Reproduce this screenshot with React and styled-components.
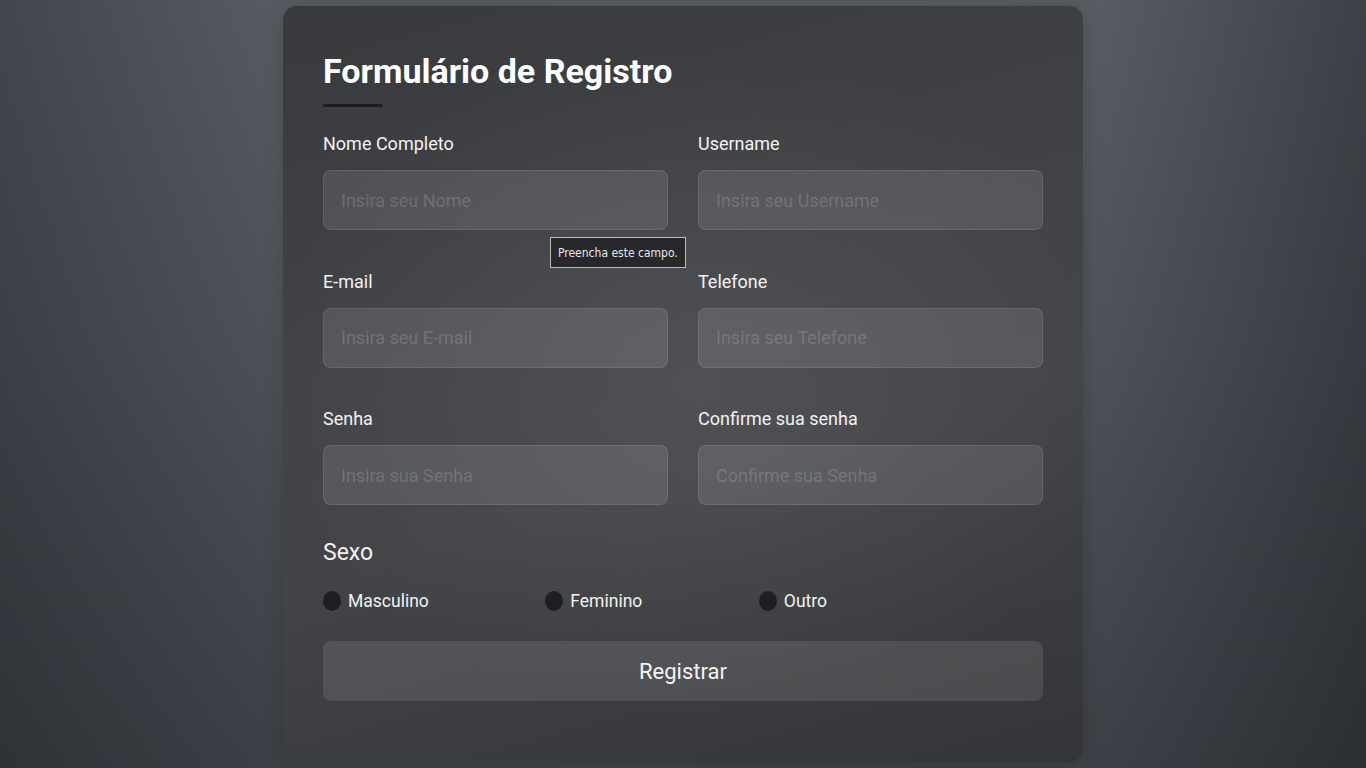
import React from "react";
import styled, { createGlobalStyle } from "styled-components";

const Global = createGlobalStyle`
  html, body { margin: 0; padding: 0; }
  body {
    font-family: Roboto, "Noto Sans", "Liberation Sans", sans-serif;
    background: #45484e;
  }
  * { box-sizing: border-box; }
`;

const Page = styled.div`
  min-height: 100vh;
  display: flex;
  justify-content: center;
  align-items: flex-start;
  padding-top: 6px;
  background:
    linear-gradient(90deg, rgba(10, 12, 16, 0.28) 0%, rgba(10, 12, 16, 0) 22%, rgba(10, 12, 16, 0) 80%, rgba(10, 12, 16, 0.35) 100%),
    linear-gradient(180deg, #595c63 0%, #4f5259 45%, #3d4046 100%);
`;

const Card = styled.form`
  width: 800px;
  padding: 40px 40px 61px;
  border-radius: 14px;
  background:
    radial-gradient(ellipse 55% 45% at 52% 50%, rgba(255, 255, 255, 0.07), rgba(255, 255, 255, 0) 100%),
    linear-gradient(165deg, #393a3e 0%, #424347 40%, #434448 60%, #343538 100%);
  box-shadow: 0 0 20px rgba(0, 0, 0, 0.15);
  display: flex;
  flex-direction: column;
`;

const Title = styled.h1`
  margin: 0;
  padding-top: 5px;
  font-size: 34px;
  line-height: 41px;
  font-weight: 700;
  color: #ffffff;
  letter-spacing: 0;
`;

const Underline = styled.div`
  width: 60px;
  height: 3px;
  margin-top: 12px;
  background: #1c1d20;
  border-radius: 2px;
`;

const Grid = styled.div`
  margin-top: 25px;
  display: grid;
  grid-template-columns: 1fr 1fr;
  column-gap: 30px;
  row-gap: 39.5px;
`;

const Field = styled.div`
  position: relative;
  display: flex;
  flex-direction: column;
`;

const Label = styled.label`
  font-size: 18px;
  line-height: 24px;
  color: #f2f2f2;
  margin-bottom: 14px;
`;

const Input = styled.input`
  height: 60px;
  width: 100%;
  padding: 0 17px;
  border-radius: 8px;
  border: 1px solid rgba(255, 255, 255, 0.1);
  background: rgba(255, 255, 255, 0.1);
  font-family: inherit;
  font-size: 18px;
  color: #fff;
  outline: none;
  &::placeholder { color: rgba(255, 255, 255, 0.17); }
`;

const Tooltip = styled.div`
  position: absolute;
  top: calc(100% + 7px);
  left: 227px;
  height: 31px;
  padding: 0 7px;
  display: flex;
  align-items: center;
  background: #27282b;
  border: 1px solid #b9babc;
  color: #e6e6e6;
  font-family: "DejaVu Sans Condensed", "Liberation Sans Narrow", "Liberation Sans", sans-serif;
  font-size: 12px;
  white-space: nowrap;
  z-index: 2;
`;

const SectionTitle = styled.div`
  margin-top: 33px;
  font-size: 23px;
  line-height: 30px;
  color: #f2f2f2;
`;

const RadioRow = styled.div`
  margin-top: 21px;
  width: 70%;
  display: flex;
  justify-content: space-between;
`;

const RadioOption = styled.label`
  display: flex;
  align-items: center;
  gap: 7px;
  font-size: 17.5px;
  line-height: 24px;
  color: #f2f2f2;
`;

const Radio = styled.input.attrs({ type: "radio" })`
  appearance: none;
  margin: 0;
  width: 18px;
  height: 20px;
  border-radius: 50%;
  background: #1e1f22;
`;

const Button = styled.button`
  margin-top: 28px;
  height: 60px;
  border: none;
  border-radius: 8px;
  background: rgba(255, 255, 255, 0.1);
  color: #f4f4f4;
  font-family: inherit;
  font-size: 22px;
`;

const fields = [
  { label: "Nome Completo", ph: "Insira seu Nome", tip: true },
  { label: "Username", ph: "Insira seu Username" },
  { label: "E-mail", ph: "Insira seu E-mail" },
  { label: "Telefone", ph: "Insira seu Telefone" },
  { label: "Senha", ph: "Insira sua Senha", type: "password" },
  { label: "Confirme sua senha", ph: "Confirme sua Senha", type: "password" },
];

export default function App() {
  return (
    <>
      <Global />
      <Page>
        <Card onSubmit={(e) => e.preventDefault()}>
          <Title>Formulário de Registro</Title>
          <Underline />
          <Grid>
            {fields.map((f) => (
              <Field key={f.label}>
                <Label>{f.label}</Label>
                <Input type={f.type || "text"} placeholder={f.ph} />
                {f.tip && <Tooltip>Preencha este campo.</Tooltip>}
              </Field>
            ))}
          </Grid>
          <SectionTitle>Sexo</SectionTitle>
          <RadioRow>
            <RadioOption><Radio name="sexo" />Masculino</RadioOption>
            <RadioOption><Radio name="sexo" />Feminino</RadioOption>
            <RadioOption><Radio name="sexo" />Outro</RadioOption>
          </RadioRow>
          <Button type="submit">Registrar</Button>
        </Card>
      </Page>
    </>
  );
}
